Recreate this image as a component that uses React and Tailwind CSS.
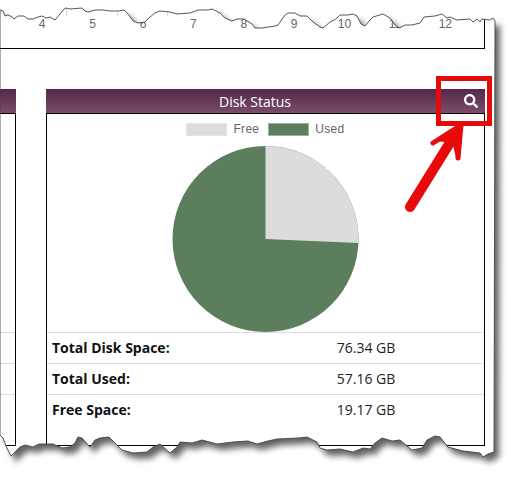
import React from 'react';
import { FaSearch } from 'react-icons/fa';

const months = [4, 5, 6, 7, 8, 9, 10, 11, 12];

const rows = [
  { label: 'Total Disk Space:', value: '76.34 GB' },
  { label: 'Total Used:', value: '57.16 GB' },
  { label: 'Free Space:', value: '19.17 GB' },
];

const topEdge =
  '0,10 3,11 5,16 8,15 12,17 14,19 18,16 24,16 28,19 33,19 38,17 42,16 46,18 50,17 55,20 60,14 64,9 66,8 70,9 82,8 85,11 88,12 95,10 103,10 110,11 118,11 124,10 128,14 133,21 138,23 145,22 150,17 155,13 160,11 170,12 177,14 190,13 198,10 208,10 212,9 220,13 225,18 232,21 237,19 244,19 252,24 255,28 262,28 275,26 278,25 285,15 288,13 295,13 300,16 307,16 313,22 320,27 323,28 330,22 336,19 340,15 348,15 353,14 357,16 361,24 365,26 370,20 373,17 383,14 390,18 395,25 399,28 405,25 412,25 420,23 424,17 435,16 442,14 447,18 450,17 457,20 470,19 473,22 477,19 480,22 482,19 490,20 493,18 495,21';

const bottomEdge =
  '494,452 488,454 483,457 480,453 463,451 448,447 440,437 435,436 427,440 422,448 412,450 400,440 392,441 382,438 375,443 370,449 363,448 353,452 340,449 327,450 320,448 317,442 307,437 298,438 277,439 268,441 257,444 248,441 233,442 217,444 202,440 192,443 180,442 177,447 170,453 160,444 153,447 147,452 133,453 122,450 117,445 109,437 100,438 95,440 90,447 82,438 78,437 75,443 70,447 62,448 53,444 39,444 33,447 25,445 20,447 15,452 11,456 7,448 3,438 0,435';

const paper = `${topEdge} ${bottomEdge}`;
const outside = `M0,0 H511 V479 H0 Z M${paper.replace(/ /g, ' L')} Z`;

function PaperEdges() {
  return (
    <svg className="absolute inset-0" width="511" height="479" viewBox="0 0 511 479">
      <defs>
        <filter id="blur" x="-10%" y="-10%" width="120%" height="120%">
          <feGaussianBlur stdDeviation="3.2" />
        </filter>
        <clipPath id="outside">
          <path d={outside} clipRule="evenodd" />
        </clipPath>
      </defs>
      <path d={outside} fill="#fff" fillRule="evenodd" />
      <g clipPath="url(#outside)">
        <polygon points={paper} fill="#000" fillOpacity="0.62" filter="url(#blur)" transform="translate(5 6)" />
      </g>
      <polygon points={paper} fill="none" stroke="#444" strokeWidth="0.9" />
    </svg>
  );
}

function Callout() {
  return (
    <svg className="absolute inset-0" width="511" height="479" viewBox="0 0 511 479">
      <rect x="438.5" y="78.5" width="51" height="45" fill="none" stroke="#e60a0a" strokeWidth="5" />
      <line x1="410" y1="207" x2="451" y2="141" stroke="#e60a0a" strokeWidth="10" strokeLinecap="round" />
      <polygon points="463,123 434,141 445,142 453,145 456,158 460,158" fill="#e60a0a" />
      <line x1="461" y1="125" x2="433" y2="143" stroke="#e60a0a" strokeWidth="5" strokeLinecap="round" />
      <line x1="461" y1="125" x2="458" y2="158" stroke="#e60a0a" strokeWidth="5" strokeLinecap="round" />
    </svg>
  );
}

export default function App() {
  return (
    <div className="relative h-[479px] w-[511px] overflow-hidden bg-white font-['Open_Sans',sans-serif]">
      <div className="w-[485px]">
        <div className="flex h-[49px] border-r border-b border-black pl-[17px] font-['Liberation_Sans',sans-serif] text-[12px] leading-[16px] text-[#666]">
          {months.map((m) => (
            <div key={m} className="w-[50.4px]">
              <div className="h-[16px] border-r border-[#ddd]" />
              <div className="text-center">{m}</div>
            </div>
          ))}
        </div>

        <div className="mt-[40px] flex h-[357px] gap-[30px]">
          <div className="flex w-[16px] flex-col">
            <div className="h-[24px] bg-gradient-to-b from-[#54284a] to-[#7a4d68]" />
            <div className="flex flex-1 flex-col border-t border-r border-b border-black pt-[218px]">
              <div className="h-[31px] border-t border-[#ddd]" />
              <div className="h-[31px] border-t border-[#ddd]" />
              <div className="h-[31px] border-t border-[#ddd]" />
            </div>
          </div>

          <div className="flex w-[439px] flex-col">
            <div className="flex h-[24px] items-center bg-gradient-to-b from-[#54284a] to-[#7a4d68] text-white">
              <div className="flex-1 text-center text-[14px]">Disk Status</div>
              <FaSearch className="mr-[7px] h-[14px] w-[14px]" />
            </div>
            <div className="flex flex-1 flex-col border border-black">
              <div className="mt-[9px] flex items-center justify-center gap-[6px] font-['Liberation_Sans',sans-serif] text-[12px] leading-[13px] text-[#666]">
                <div className="h-[13px] w-[41px] border border-[#e5e5e5] bg-[#dcdcdc]" />
                <span className="mr-[3px] tracking-[0.3px]">Free</span>
                <div className="h-[13px] w-[41px] border border-[#9db29e] bg-[#5b7f5d]" />
                <span className="tracking-[0.3px]">Used</span>
              </div>

              <svg className="mx-auto mt-[10px]" width="187" height="186" viewBox="0 0 187 186">
                <circle cx="93.5" cy="93" r="93" fill="#5b7f5d" />
                <path d="M93.5,93 L93.5,0 A93,93 0 0 1 186.4,97 Z" fill="#dcdcdc" />
              </svg>

              <div className="text-[14px] text-[#222]">
                {rows.map((r) => (
                  <div key={r.label} className="grid h-[31px] grid-cols-[201px_1fr] items-center border-t border-[#ddd] pb-[2px]">
                    <div className="pl-[5px] font-bold text-[#111]">{r.label}</div>
                    <div className="text-center">{r.value}</div>
                  </div>
                ))}
              </div>
            </div>
          </div>
        </div>
      </div>

      <PaperEdges />
      <Callout />
    </div>
  );
}
